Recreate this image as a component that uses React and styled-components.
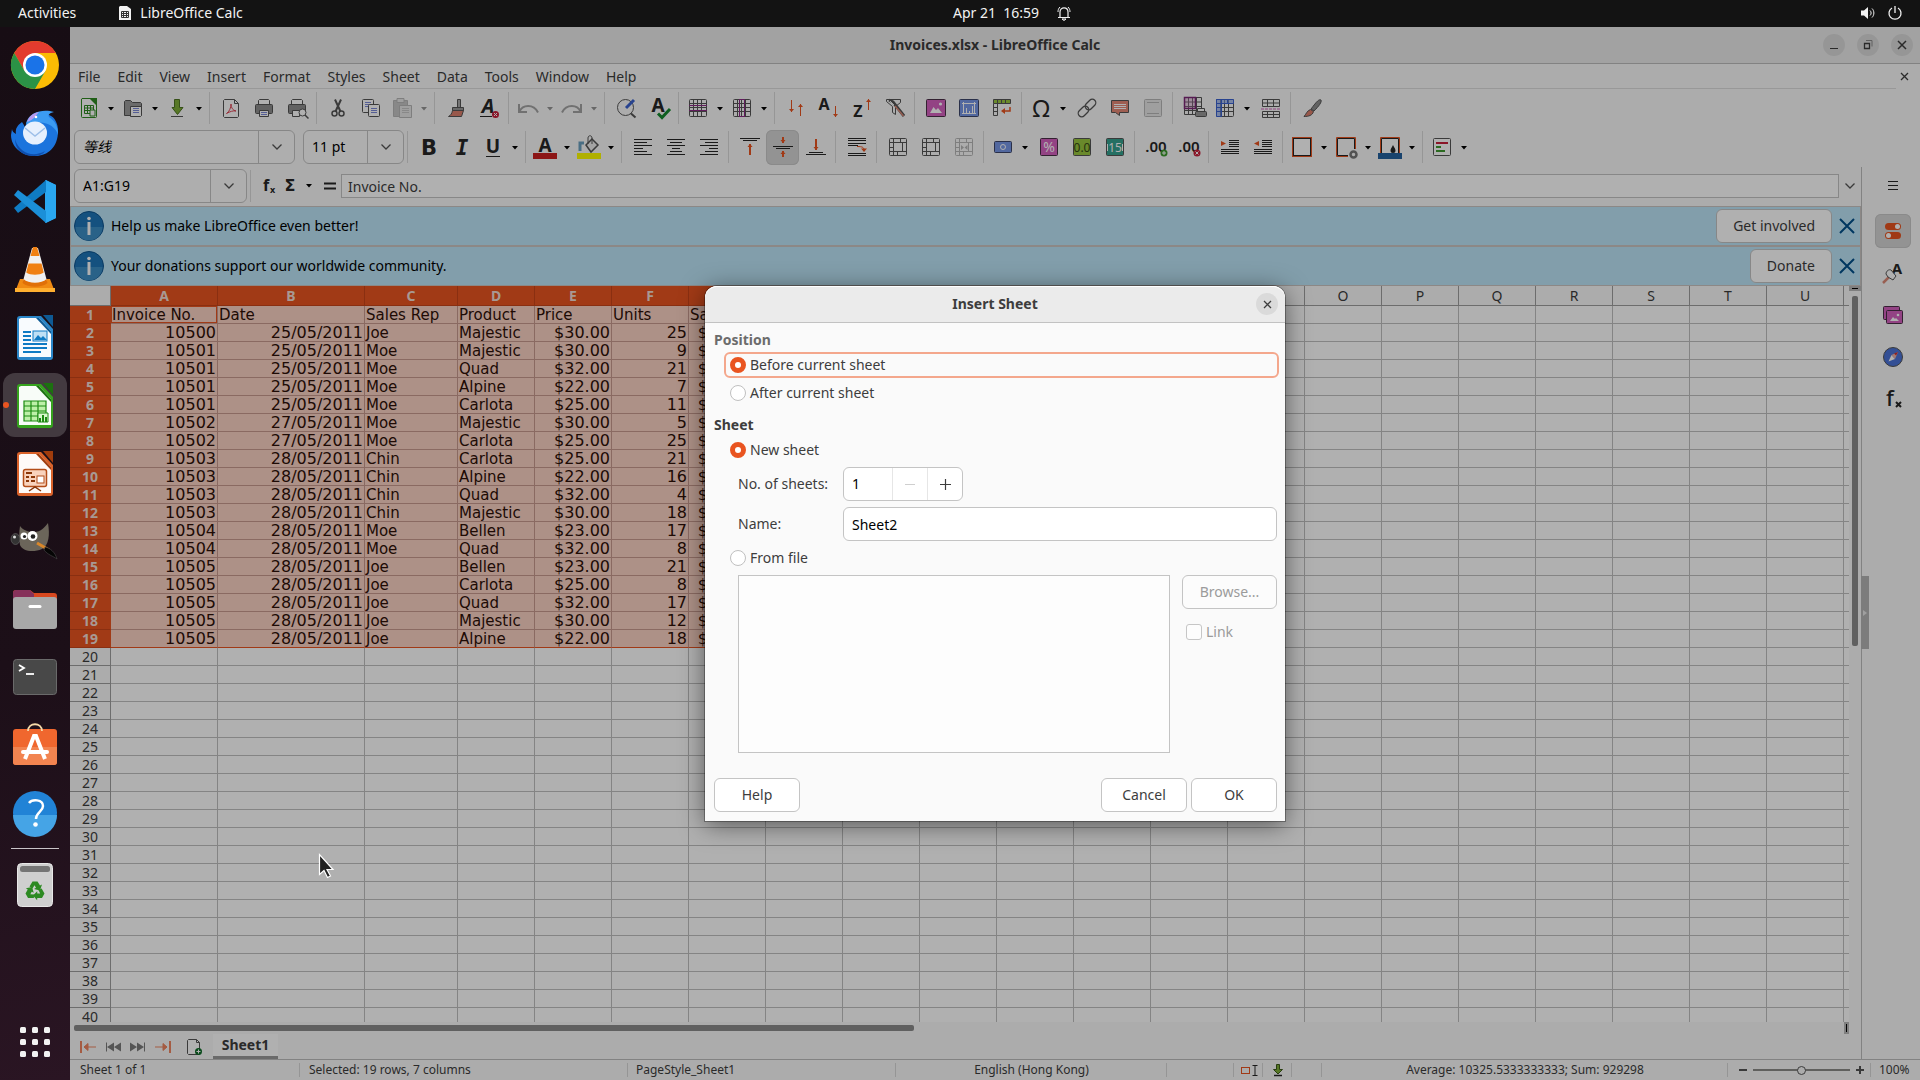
import React from 'react';
import styled, { createGlobalStyle, css } from 'styled-components';

const UI = '"Noto Sans", "Noto Sans CJK SC", sans-serif';
const CELL = '"DejaVu Sans", "Noto Sans CJK SC", sans-serif';
const C = {
  text: '#3d3d3d', bg: '#fafafa', line: '#c4c4c4', soft: '#e0e0e0',
  orange: '#e95420', ink: '#555555', dark: '#262626', grid: '#c0c0c0', head: '#9f9f9f',
};

const Global = createGlobalStyle`
  *, *::before, *::after { box-sizing: border-box; }
  body { margin: 0; background: #1c0f18; font: 14px/20px ${UI}; color: ${C.text}; overflow: hidden; }
  button, input, select { font: inherit; color: inherit; margin: 0; }
  button { padding: 0; border: 0; background: none; cursor: default; }
  svg { display: block; flex: none; overflow: visible; }
`;

/* ---------- shell ---------- */
const Screen = styled.div`display: flex; flex-direction: column; height: 100vh;`;
const TopBar = styled.header`
  display: grid; grid-template-columns: 1fr auto 1fr; align-items: center;
  flex: none; height: 27px; padding: 0 18px 1px; background: #131313; color: #f2f2f2;
`;
const TopGroup = styled.div`
  display: flex; align-items: center; gap: ${p => p.$gap || 0}px;
  justify-content: ${p => (p.$end ? 'flex-end' : 'flex-start')};
  padding-left: ${p => p.$lead || 0}px; white-space: pre;
`;
const Desktop = styled.div`display: flex; flex: 1; min-height: 0;`;
const Dock = styled.nav`
  display: flex; flex-direction: column; align-items: center; flex: none; width: 70px; padding: 4px 0;
  background: linear-gradient(170deg, #170d14 0%, #1c0f18 60%, #2a1523 100%);
`;
const DockItem = styled.button`
  position: relative; display: grid; place-items: center; width: 64px; height: 64px; margin: 2px 0;
  border-radius: 12px; background: ${p => (p.$active ? '#433a40' : 'transparent')};
  ${p => p.$active && css`&::before { content: ''; position: absolute; left: 0; top: 29px; width: 6px; height: 6px; border-radius: 50%; background: ${C.orange}; }`}
`;
const DockRule = styled.hr`width: 48px; height: 1px; margin: 1px 0 2px; border: 0; background: #c9c5c8; flex: none;`;
const Spacer = styled.div`flex: 1;`;

const Window = styled.main`
  position: relative; display: flex; flex-direction: column; flex: 1; min-width: 0; background: ${C.bg};
`;
const TitleBar = styled.div`
  display: grid; grid-template-columns: 1fr auto 1fr; align-items: center; flex: none;
  height: 37px; padding: 0 7px; background: #ebebeb; border-bottom: 1px solid #bdbdbd;
`;
const Title = styled.h1`margin: 0; grid-column: 2; font-size: 14px; line-height: 20px; font-weight: 700;`;
const WinButtons = styled.div`display: flex; gap: 12px; justify-content: flex-end;`;
const Round = styled.button`
  display: grid; place-items: center; width: 22px; height: 22px; border-radius: 50%; background: #dadada;
`;
const MenuRow = styled.div`display: flex; flex: none; padding-right: 8px;`;
const MenuBar = styled.nav`
  display: flex; flex: 1; height: 25px; padding: 1px 0 0 8px; gap: 17px; align-items: center; border-bottom: 1px solid #dcdcdc;
`;
const MenuItem = styled.button`height: 24px; white-space: nowrap;`;
const CloseDoc = styled.button`display: grid; place-items: center; width: 16px; height: 24px;`;

/* ---------- tool bars ---------- */
const Bar = styled.div`display: flex; align-items: center; flex: none; height: 39px; padding: 0 0 1px 4px;`;
const Tool = styled.button`
  display: grid; place-items: center; width: 33px; height: 35px; border-radius: 6px;
  opacity: ${p => (p.$off ? 0.4 : 1)};
  ${p => p.$on && css`background: #d6d6d6; box-shadow: inset 0 0 0 1px #c8c8c8;`}
`;
const Split = styled.div`display: flex; width: 44px; height: 35px; opacity: ${p => (p.$off ? 0.4 : 1)};`;
const SplitMain = styled.button`display: grid; place-items: center; width: 30px;`;
const SplitDrop = styled.button`display: grid; place-items: center; width: 14px; padding-top: 2px;`;
const Sep = styled.div`width: 1px; height: 32px; margin: 0 4px 0 3px; background: #dadada; flex: none;`;
const Combo = styled.div`
  display: flex; height: 34px; width: ${p => p.$w}px; margin-right: ${p => p.$gap || 0}px; flex: none;
  border: 1px solid ${C.line}; border-radius: 6px; background: #fdfdfd; overflow: hidden;
`;
const ComboInput = styled.input`
  flex: 1; min-width: 0; padding: 0 8px; border: 0; outline: 0; background: none; color: #000;
  font-style: ${p => (p.$italic ? 'italic' : 'normal')};
`;
const ComboDrop = styled.button`display: grid; place-items: center; width: 36px; border-left: 1px solid ${C.line};`;
const MiniTool = styled.button`display: grid; place-items: center; width: ${p => p.$w}px; height: 34px;`;
const FormulaInput = styled.input`
  flex: 1; min-width: 0; height: 24px; padding: 0 6px; border: 1px solid ${C.line}; background: #fff; outline: 0;
`;

/* ---------- body ---------- */
const Body = styled.div`display: flex; flex: 1; min-height: 0;`;
const Main = styled.div`display: flex; flex-direction: column; flex: 1; min-width: 0;`;
const Info = styled.div`
  display: flex; align-items: center; flex: none; height: 40px; padding: 0 5px 0 3px; gap: 7px;
  border: 1px solid #cbc5c2; background: #bde5f8; color: #000;
`;
const InfoText = styled.span`flex: 1;`;
const InfoClose = styled.button`display: grid; place-items: center; width: 16px; height: 30px;`;
const PushButton = styled.button`
  height: 34px; min-width: ${p => p.$min || 0}px; padding: 0 16px; border: 1px solid ${C.line}; border-radius: 6px;
  background: #fff; color: ${C.text};
  &:disabled { color: #9b9b9b; background: #fcfcfc; }
`;
const GridArea = styled.div`display: flex; flex: 1; min-height: 0;`;
const GridClip = styled.div`flex: 1; min-width: 0; overflow: hidden; background: #fff;`;
const Sheet = styled.table`
  width: 100%; table-layout: fixed; border-collapse: separate; border-spacing: 0; font: 15px/16px ${CELL}; color: #000;
`;
const Col = styled.col`width: ${p => (p.$w ? p.$w + 'px' : 'auto')};`;
const HeadCell = styled.th`
  height: ${p => (p.$top ? 20 : 18)}px; padding: 0; font: ${p => (p.$sel ? 700 : 400)} 14px/17px ${UI};
  color: ${p => (p.$sel ? '#f4ded6' : C.text)};
  background: ${p => (p.$sel ? C.orange : C.bg)};
  border-right: ${p => (p.$last ? 0 : 1)}px solid ${p => (p.$sel ? (p.$top ? '#c8441a' : C.orange) : C.head)};
  border-bottom: 1px solid ${p => (p.$sel ? '#c8441a' : C.head)};
  text-align: center; overflow: hidden;
`;
const Cell = styled.td`
  height: 18px; padding: 1px 1px 0; white-space: nowrap; overflow: hidden;
  font-size: ${p => (p.$num ? 16 : 15)}px;
  text-align: ${p => (p.$num ? 'right' : 'left')};
  border-right: ${p => (p.$last ? 0 : 1)}px solid ${p => (p.$sel ? '#c89a8e' : C.grid)};
  border-bottom: 1px solid ${p => (p.$end ? C.orange : p.$sel ? '#c89a8e' : C.grid)};
  background: ${p => (p.$sel ? '#fbd2c4' : '#fff')};
  color: #2e1008;
  ${p => p.$cursor && css`box-shadow: inset 0 0 0 1px ${C.orange};`}
`;
const VScroll = styled.div`
  display: flex; flex-direction: column; align-items: center; width: 12px; flex: none; gap: 5px;
`;
const SplitV = styled.div`
  display: grid; place-items: center; width: 12px; height: 5px; background: #b8b8b8;
  &::before { content: ''; width: 6px; height: 1px; background: #000; }
`;
const VThumb = styled.div`width: 6px; height: 350px; border-radius: 2px; background: #8b8b8b;`;
const HScroll = styled.div`display: flex; align-items: center; justify-content: space-between; flex: none; height: 12px; padding: 0 12px 0 4px;`;
const HThumb = styled.div`width: 840px; height: 6px; border-radius: 2px; background: #8b8b8b;`;
const SplitH = styled.div`
  display: grid; place-items: center; width: 5px; height: 12px; background: #b8b8b8;
  &::before { content: ''; width: 1px; height: 8px; background: #000; }
`;
const Tabs = styled.div`display: flex; align-items: center; flex: none; height: 25px; padding-left: 5px;`;
const TabTool = styled.button`display: grid; place-items: center; width: 25px; height: 24px; margin-left: ${p => p.$gap || 0}px;`;
const Tab = styled.button`
  align-self: stretch; width: 65px; margin-left: 7px; background: #fff; font-weight: 700; border-bottom: 3px solid #9a9a9a;
`;
const Sidebar = styled.aside`
  position: relative; display: flex; flex-direction: column; align-items: center; gap: 8px; flex: none;
  width: 59px; padding: 2px 0 0 3px; border-left: 1px solid #bdbdbd;
`;
const SideItem = styled.button`
  display: grid; place-items: center; width: 36px; height: 34px; border-radius: 6px; margin-bottom: ${p => (p.$menu ? 3 : 0)}px;
  ${p => p.$on && css`background: #d6d6d6; box-shadow: inset 0 0 0 1px #c8c8c8;`}
`;
const Handle = styled.button`
  position: absolute; left: -1px; top: calc(50% - 37px); width: 8px; height: 73px; display: grid; place-items: center;
  background: #b4b4b4;
`;
const Status = styled.footer`
  display: grid; grid-template-columns: 230px 328px 268px 271px 67px 29px 29px 30px 1fr 143px 49px;
  flex: none; height: 21px; border-top: 1px solid #bdbdbd; font-size: 12px; line-height: 20px;
`;
const Field = styled.div`
  display: flex; align-items: center; min-width: 0; white-space: nowrap; padding: 0 ${p => (p.$pad === undefined ? 8 : p.$pad)}px;
  justify-content: ${p => (p.$mid ? 'center' : 'flex-start')};
  background: linear-gradient(#d8d8d8, #d8d8d8) right center / 1px 14px no-repeat;
  &:last-child { background: none; }
`;
const ZoomField = styled(Field)`gap: 4px; padding: 0 5px 0 9px;`;
const ZoomButton = styled.button`display: grid; place-items: center; width: 12px; height: 16px;`;
const Zoom = styled.input`
  appearance: none; flex: 1; min-width: 0; height: 12px; margin: 0; background: linear-gradient(#8c8c88, #8c8c88) center / 100% 2px no-repeat;
  &::-webkit-slider-thumb { appearance: none; width: 9px; height: 9px; border-radius: 50%; background: #fafafa; border: 1px solid #555; }
`;

/* ---------- dialog ---------- */
const Backdrop = styled.div`
  position: absolute; inset: 0; display: flex; align-items: center; justify-content: center; background: rgba(0, 0, 0, 0.31);
`;
const Dialog = styled.section`
  width: 580px; background: ${C.bg}; border-radius: 12px 12px 0 0;
  box-shadow: 0 0 0 1px rgba(0, 0, 0, 0.3), 0 4px 24px rgba(0, 0, 0, 0.5);
`;
const DialogHead = styled.div`
  display: grid; grid-template-columns: 1fr auto 1fr; align-items: center; height: 37px; padding: 0 7px;
  border-radius: 12px 12px 0 0; background: #ebebeb; border-bottom: 1px solid #c2c2c2; box-shadow: inset 0 1px 0 #fff;
`;
const DialogTitle = styled.h2`grid-column: 2; margin: 0; font-size: 14px; line-height: 20px;`;
const HeadEnd = styled.div`display: flex; justify-content: flex-end;`;
const Form = styled.form`padding: 7px 6px 9px 9px;`;
const Group = styled.fieldset`margin: 0 0 ${p => p.$after}px; padding: 0; border: 0; min-width: 0;`;
const Legend = styled.legend`padding: 0; margin-bottom: 2px; font-weight: 700; color: ${p => (p.$light ? '#6c6c6c' : C.text)};`;
const Option = styled.label`
  display: flex; align-items: center; gap: 4px; height: 26px; margin: 0 0 ${p => p.$after || 0}px 10px; padding-left: 4px;
  border: 2px solid ${p => (p.$focus ? '#f4a78c' : 'transparent')}; border-radius: 6px;
`;
const Radio = styled.input`
  appearance: none; width: 16px; height: 16px; border-radius: 50%; border: 1px solid #c0c0c0; background: #fff;
  &:checked { border: 5px solid ${C.orange}; }
`;
const FormRow = styled.div`
  display: flex; align-items: center; margin: 0 2px ${p => p.$after}px 24px;
`;
const RowLabel = styled.label`width: 105px; flex: none;`;
const TextInput = styled.input`
  flex: 1; min-width: 0; height: 34px; padding: 0 8px; border: 1px solid ${C.line}; border-radius: 6px; background: #fff; color: #000; outline: 0;
`;
const Spin = styled.div`
  display: flex; width: 120px; height: 34px; border: 1px solid ${C.line}; border-radius: 6px; background: #fff; overflow: hidden;
`;
const SpinInput = styled.input`flex: 1; min-width: 0; padding: 0 8px; border: 0; background: none; color: #000; outline: 0;`;
const SpinButton = styled.button`
  display: grid; place-items: center; width: 35px; border-left: 1px solid #e6e6e6; color: #3d3d3d;
  &:disabled { color: #cfcfcf; }
`;
const FileRow = styled.div`display: flex; gap: 12px; margin: 0 2px 0 24px;`;
const FileList = styled.select`
  flex: 1; min-width: 0; height: 178px; border: 1px solid ${C.line}; border-radius: 0; background: #fdfdfd; outline: 0; opacity: 1;
`;
const FileSide = styled.div`display: flex; flex-direction: column; width: 95px; gap: 10px;`;
const CheckLabel = styled.label`display: flex; align-items: center; gap: 4px; height: 26px; padding-left: 4px; color: #9b9b9b;`;
const Check = styled.input`
  appearance: none; width: 16px; height: 16px; border: 1px solid #c6c6c6; border-radius: 3px; background: #fdfdfd;
`;
const Actions = styled.div`display: flex; gap: 4px; padding-right: 2px;`;
const Pointer = styled.svg`position: absolute; left: 318px; top: 853px; pointer-events: none;`;

/* ---------- icons ---------- */
const Svg = ({ s = 24, vb, children }) => (
  <svg width={s} height={s} viewBox={vb || `0 0 ${s} ${s}`} fill="none" aria-hidden="true">{children}</svg>
);
const Glyph = ({ x = 12, y = 20, z = 22, w = 700, f = UI, it, c = C.dark, children }) => (
  <text x={x} y={y} textAnchor="middle" fontSize={z} fontWeight={w} fontStyle={it ? 'italic' : 'normal'} fill={c} style={{ fontFamily: f }}>{children}</text>
);
const Lines = ({ ys, x1 = 3, x2 = 21, c = C.dark, w = 1 }) => ys.map((y, i) => {
  const a = Array.isArray(y) ? y : [y, x1, x2];
  return <path key={i} d={`M${a[1]} ${a[0] + 0.5}H${a[2]}`} stroke={c} strokeWidth={w} />;
});
const Caret = () => <Svg s={8}><path d="M1 2h6L4 5.500z" fill="#000" /></Svg>;
const Chevron = () => <Svg s={12}><path d="M1.500 3.500 6 8l4.500-4.500" stroke="#555" strokeWidth="1.300" /></Svg>;
const Cross = ({ s = 10, c = '#3d3d3d', w = 1.5 }) => (
  <Svg s={s}><path d={`M1 1L${s - 1} ${s - 1}M${s - 1} 1L1 ${s - 1}`} stroke={c} strokeWidth={w} /></Svg>
);
const Arrow = ({ x, y1, y2, c = C.orange, w = 1 }) => {
  const d = y2 > y1 ? -1 : 1;
  return <><path d={`M${x} ${y1}V${y2}`} stroke={c} strokeWidth={w} /><path d={`M${x - 2.5} ${y2 + 3 * d}h5L${x} ${y2}z`} fill={c} /></>;
};
const BadgeX = ({ x = 17.5, y = 18.5 }) => (
  <><circle cx={x} cy={y} r="3.500" fill="#c9213b" /><path d={`M${x - 1.5} ${y - 1.5}l3 3m0-3l-3 3`} stroke="#fff" /></>
);
const BadgePlus = ({ x = 17.5, y = 18.5, c = '#3f9a2f' }) => (
  <><circle cx={x} cy={y} r="3.500" fill={c} /><path d={`M${x - 2} ${y}h4m-2-2v4`} stroke="#fff" /></>
);
const TableLines = ({ c = C.ink }) => (
  <><rect x="3.500" y="3.500" width="17" height="17" rx="1" stroke={c} /><path d="M3.500 7.500h17M3.500 11.500h17M3.500 15.500h17M7.500 3.500v17M11.500 3.500v17M15.500 3.500v17" stroke={c} /></>
);
const MergeBase = () => (
  <><rect x="3.500" y="3.500" width="17" height="17" rx="1" stroke={C.ink} /><path d="M3.500 7.500h17M3.500 12.500h4M3.500 16.500h17M7.500 3.500v17M14.500 3.500v4M16.500 7.500v9M11.500 16.500v4" stroke={C.ink} /></>
);

const ICONS = {
  new: <><path d="M5 2.500h9.500l5 5v13a1 1 0 0 1-1 1H5.500a1 1 0 0 1-1-1V3z" stroke="#2f8a22" fill="#fff" /><path d="M12 2h8v8z" fill="#2f8a22" /><path d="M7.500 9.500h9v8h-9zM7.500 12h9M7.500 14.500h9M10.500 9.500v8M13.500 9.500v8" stroke="#2f8a22" /><path d="M13 14h5v6h-5z" fill="#fff" stroke="#2f8a22" /></>,
  open: <><path d="M3.500 19.500v-14l1-1h5l2 2h8l1 1v12z" fill="#9b9b9b" stroke={C.ink} /><path d="M9.500 10.500h11v9l-1 1h-10z" fill="#fff" stroke={C.ink} /><Lines ys={[12, 14, 16]} x1={12} x2={18} c="#7b88d8" /></>,
  save: <><path d="M9.500 3.500h5v8h3.500l-5.500 7-5.500-7h2.500z" fill="#7fae37" stroke="#4f7423" /><path d="M6 20.500h12" stroke={C.ink} /></>,
  pdf: <><path d="M4.500 4.500l1-1h10l4 4v13l-1 1h-13l-1-1z" stroke={C.ink} fill="#fff" /><path d="M15.500 3.500v4h4" stroke={C.ink} /><path d="M7.500 17.500c3-2 4.500-6 4.500-9.500 0 4 2 6.500 5 7-3-.5-6 .5-9.500 2.500z" stroke="#dd4655" /></>,
  print: <><path d="M6.500 8V4.500l1-1h9l1 1V8" stroke={C.ink} fill="#fff" /><rect x="3.500" y="8.500" width="17" height="9" rx="1" fill="#8f8f8f" stroke={C.ink} /><path d="M7.500 14.500h9v6h-9z" fill="#fff" stroke={C.ink} /><Lines ys={[16, 18]} x1={9} x2={15} c="#7b88d8" /></>,
  preview: <><path d="M6.500 8V4.500l1-1h9l1 1V8" stroke={C.ink} fill="#fff" /><rect x="3.500" y="8.500" width="17" height="9" rx="1" fill="#8f8f8f" stroke={C.ink} /><path d="M7.500 14.500h7v6h-7z" fill="#fff" stroke={C.ink} /><circle cx="17.500" cy="16.500" r="3.500" fill="#fff" stroke={C.ink} /><path d="M20 19l3.500 3.500" stroke={C.ink} strokeWidth="1.500" /></>,
  cut: <><path d="M9 3.500l5.500 12M15 3.500l-5.500 12" stroke={C.ink} strokeWidth="2" /><circle cx="8.500" cy="17.500" r="2.500" stroke={C.ink} strokeWidth="1.500" /><circle cx="15.500" cy="17.500" r="2.500" stroke={C.ink} strokeWidth="1.500" /></>,
  copy: <><rect x="3.500" y="3.500" width="11" height="13" rx="1" stroke={C.ink} fill="#fff" /><Lines ys={[6, 8, 10]} x1={6} x2={12} c="#7b88d8" /><rect x="9.500" y="8.500" width="11" height="12" rx="1" stroke={C.ink} fill="#fff" /><Lines ys={[12, 14, 16]} x1={12} x2={18} c="#7b88d8" /></>,
  paste: <><path d="M3.500 4.500h14v16h-14z" fill="#777" stroke={C.ink} /><path d="M7 2.500h7v4H7z" fill="#ccc" stroke={C.ink} /><path d="M9.500 9.500h12v12h-12z" fill="#ccc" stroke={C.ink} /><Lines ys={[12, 14, 16]} x1={12} x2={19} c="#777" /></>,
  clone: <><path d="M13.500 3.500h3v8h-3z" fill="#aaa" stroke={C.ink} /><path d="M8.500 11.500h11v3h-11z" fill="#999" stroke={C.ink} /><path d="M8.500 14.500h11l-2 6H4.500c2-1 3.500-3 4-6z" fill="#dd7f6c" stroke={C.ink} /></>,
  clear: <><Glyph x={11} y={17} z={20} it>A</Glyph><path d="M3 20.500h12" stroke={C.dark} /><BadgeX x={18.5} /></>,
  undo: <path d="M3 8v8h8M3.500 15.500c3-7 14-8 18.500 1" stroke={C.dark} strokeWidth="2" />,
  redo: <path d="M21 8v8h-8M20.500 15.500c-3-7-14-8-18.500 1" stroke={C.dark} strokeWidth="2" />,
  find: <><circle cx="11.500" cy="11.500" r="8" stroke={C.ink} /><path d="M17 17.500l4.500 4" stroke={C.ink} strokeWidth="2" /><path d="M12 12l8-8" stroke="#3b62d0" strokeWidth="3" /></>,
  spell: <><Glyph x={11} y={16} z={19}>A</Glyph><path d="M11 17.500l4 4 8-8.500" stroke="#158a2e" strokeWidth="3" /></>,
  row: <><TableLines /><path d="M3 9.500h18M3 14.500h18" stroke="#8d2a86" /></>,
  col: <><TableLines /><path d="M9.500 3v18M14.500 3v18M9.500 3.500h5M9.500 20.500h5" stroke="#8d2a86" /></>,
  sort: <><Arrow x={7.5} y1={4} y2={16} /><Arrow x={16.5} y1={20} y2={8} /></>,
  sortA: <><Glyph x={7} y={14} z={16}>A</Glyph><Arrow x={18.5} y1={10} y2={21} /></>,
  sortZ: <><Glyph x={8} y={21} z={16}>Z</Glyph><Arrow x={18.5} y1={14} y2={3} /></>,
  filter: <><path d="M3.500 3.500h14v3l-5 4v8l-3-2v-6l-6-5z" stroke={C.ink} /><path d="M6 4l4 2 11 14" stroke={C.ink} strokeWidth="3" /><path d="M7 5l4 4" stroke="#eee" /><path d="M12 10l8.500 10" stroke="#dd8a78" strokeWidth="1.500" /></>,
  image: <><rect x="2.500" y="3.500" width="19" height="17" rx="1" fill="#d561bf" stroke="#4b3048" /><path d="M6 17l3.500-6 2.500 3 2-2 4 5z" fill="#fff" /><circle cx="16.500" cy="8" r="1.600" fill="#fff" /></>,
  chart: <><rect x="2.500" y="3.500" width="19" height="17" rx="1" fill="#7897e6" stroke="#3d466a" /><path d="M6.500 6v12M5 7.500h14M17.500 6v12M5 17.500h14M9.500 17v-5M12.500 17v-2M15.500 17v-7" stroke="#fff" /></>,
  pivot: <><path d="M3.500 3.500h17v4h-17z" fill="#99c73f" stroke={C.ink} /><path d="M3.500 7.500v12h4v-12M3.500 11.500h4M3.500 15.500h4M7.500 3.500v4M11.500 3.500v4M15.500 3.500v4" stroke={C.ink} /><path d="M20 11v4h-6" stroke={C.orange} strokeWidth="1.500" /><path d="M15 12v6l-4-3z" fill={C.orange} /></>,
  omega: <Glyph y={21} z={24} w={400} f={UI}>Ω</Glyph>,
  link: <><rect x="-6" y="-3.500" width="12" height="7" rx="3.500" stroke={C.ink} strokeWidth="1.300" transform="translate(8.500 15.500) rotate(-45)" /><rect x="-6" y="-3.500" width="12" height="7" rx="3.500" stroke={C.ink} strokeWidth="1.300" transform="translate(15.500 8.500) rotate(-45)" /></>,
  comment: <><path d="M3.500 4.500h17v12h-9v3l-4-3h-4z" fill="#e58876" stroke={C.ink} /><Lines ys={[8, 10, 12]} x1={6} x2={18} c="#fff" /></>,
  header: <><rect x="3.500" y="3.500" width="17" height="17" rx="1" fill="#ccc" stroke={C.ink} /><path d="M6 6.500h12M6 17.500h12" stroke={C.ink} /></>,
  area: <><path d="M2.500 1.500h17v17h-17zM2.500 6h17M2.500 10.500h17M2.500 14.500h17M6.500 1.500v17M10.500 1.500v17M14.500 1.500v17" stroke={C.ink} /><path d="M2.500 1.500h11v11h-11z" fill="#c274b855" stroke="#7d2878" strokeWidth="1.500" /><path d="M15.500 12.500h7v8h-7z" fill="#fff" stroke={C.ink} /><rect x="13.500" y="15.500" width="11" height="5" rx="1" fill="#999" stroke={C.ink} /></>,
  freeze: <><TableLines /><path d="M3.500 3.500h17v4h-17zM3.500 3.500h5v17h-5z" fill="#7897e6" fillOpacity=".6" stroke="#3b62d0" /><path d="M3.500 11.500h5M3.500 15.500h5M14.500 3.500v4" stroke="#3b62d0" /></>,
  split: <><path d="M3.500 3.500h17v7h-17zM3.500 7h17M8.500 3.500v7M14.500 3.500v7M3.500 15.500h17v6h-17zM3.500 18.500h17M8.500 15.500v6M14.500 15.500v6" stroke={C.ink} /><path d="M2 13h20" stroke="#d561bf" strokeDasharray="3 1" /></>,
  draw: <><path d="M21 4c-2-1-4 1-10 9l3 2c5-5 8-9 7-11z" fill="#8f8f8f" stroke={C.ink} /><path d="M10.500 13.500l3 2c-1 4-5 5-9.500 5 2-2 3-6 6.500-7z" fill="#dd7f6c" stroke={C.ink} /></>,
  bold: <Glyph y={20} z={21} f={CELL}>B</Glyph>,
  italic: <Glyph y={20} z={21} f='"DejaVu Sans Mono", monospace' it>I</Glyph>,
  under: <><Glyph y={18} z={19}>U</Glyph><path d="M5 21.500h14" stroke={C.dark} /></>,
  fcolor: <><Glyph y={17} z={19}>A</Glyph><path d="M0 18h24v6H0z" fill="#cb2020" /></>,
  fill: <><path d="M3 16V8h4" stroke="#6aa0c0" strokeWidth="3" /><path d="M9 10l6-6 6 6-7 7z" fill="#eee" stroke={C.ink} strokeWidth="1.500" /><path d="M11 9V3c0-3 4-3 4 0v6" stroke={C.ink} /><path d="M0 18h24v6H0z" fill="#ffff00" /></>,
  left: <Lines ys={[4, [7, 3, 16], 10, [13, 3, 12], [16, 3, 16], 19]} />,
  center: <Lines ys={[4, [7, 6, 18], 10, [13, 8, 16], [16, 6, 18], 19]} />,
  right: <Lines ys={[4, [7, 8, 21], 10, [13, 12, 21], [16, 8, 21], 19]} />,
  vtop: <><Lines ys={[[3, 2, 22], [5, 5, 19]]} /><Arrow x={12} y1={20} y2={9} w={2} /></>,
  vmid: <><Lines ys={[[11, 2, 22], [13, 5, 19]]} /><Arrow x={12} y1={2} y2={8} w={2} /><Arrow x={12} y1={22} y2={16} w={2} /></>,
  vbot: <><Lines ys={[[17, 5, 19], [19, 2, 22]]} /><Arrow x={12} y1={4} y2={15} w={2} /></>,
  wrap: <><Lines ys={[3, 5, 8, [10, 3, 13], 18, 20]} /><path d="M12 11.500c6 0 7 1 7 4" stroke={C.orange} /><path d="M16 13.500h6l-3 3.500z" fill={C.orange} /></>,
  merge: <MergeBase />,
  unmerge: <><MergeBase /><path d="M9 10l3 2.500L9 15zM15.500 10l-3 2.500 3 2.500z" fill={C.ink} /></>,
  currency: <><rect x="3.500" y="6.500" width="17" height="11" rx="1" fill="#7897e6" stroke="#3d466a" /><circle cx="12" cy="12" r="2.500" stroke="#fff" /></>,
  percent: <><rect x="3.500" y="3.500" width="17" height="17" rx="1" fill="#d561bf" stroke="#4b3048" /><Glyph y={17} z={14} w={400} c="#fff">%</Glyph></>,
  number: <><rect x="3.500" y="3.500" width="17" height="17" rx="1" fill="#99c73f" stroke={C.ink} /><Glyph y={17} z={12} w={400} c="#364715">0.0</Glyph></>,
  date: <><rect x="3.500" y="3.500" width="17" height="17" rx="1" fill="#35a18f" stroke={C.ink} /><Glyph y={17} z={12} w={400} c="#fff">15</Glyph><path d="M4.500 9v7M19.500 9v7" stroke="#fff" /></>,
  decAdd: <><Glyph x={12} y={17} z={15} w={600}>.00</Glyph><BadgePlus x={20} y={18} /></>,
  decDel: <><Glyph x={12} y={17} z={15} w={600}>.00</Glyph><BadgeX x={20} y={18} /></>,
  indent: <><Lines ys={[[5, 11, 21], [7, 11, 21], [9, 11, 21], [11, 11, 21], 14, 16, 18]} /><path d="M3 6v5l5-2.500z" fill={C.orange} /></>,
  outdent: <><Lines ys={[[5, 11, 21], [7, 11, 21], [9, 11, 21], [11, 11, 21], 14, 16, 18]} /><path d="M8 6v5L3 8.500z" fill={C.orange} /></>,
  border: <><rect x="2.500" y="2.500" width="19" height="19" stroke={C.orange} /><rect x="3.500" y="3.500" width="17" height="17" stroke={C.dark} fill="#fff" /></>,
  bstyle: <><path d="M14 21.500H2.500v-19h19V14" stroke={C.orange} /><path d="M14 20.500H3.500v-17h17V14" stroke={C.dark} /><circle cx="19.500" cy="19.500" r="3" stroke="#777" strokeWidth="2.500" /></>,
  bcolor: <><path d="M2.500 18V2.500h19V18" stroke={C.orange} /><path d="M3.500 18V3.500h17V18" stroke={C.dark} fill="#fff" /><path d="M15 10c1.500 3 2.500 4 2.500 5.500a2.500 2.500 0 0 1-5 0c0-1.500 1-2.500 2.500-5.500z" fill={C.dark} /><path d="M0 18h24v6H0z" fill="#25629f" /></>,
  cond: <><rect x="3.500" y="3.500" width="17" height="17" rx="1" stroke={C.ink} fill="#fff" /><path d="M6 8h12" stroke="#c9213b" strokeWidth="2" /><path d="M6 12h5M6 16h9" stroke="#3f9a2f" strokeWidth="2" /></>,
};
const Icon = ({ n }) => <Svg>{ICONS[n]}</Svg>;

/* "v" adds a drop-down arrow, "-" greys the tool out, "*" shows it pressed */
const STANDARD = ['new v', 'open v', 'save v', '|', 'pdf', 'print', 'preview', '|', 'cut', 'copy', 'paste v-', '|', 'clone', 'clear', '|', 'undo v-', 'redo v-', '|', 'find', 'spell', '|', 'row v', 'col v', '|', 'sort', 'sortA', 'sortZ', 'filter', '|', 'image', 'chart', 'pivot', '|', 'omega v', 'link', 'comment', 'header -', '|', 'area', 'freeze v', 'split', '|', 'draw'];
const FORMATTING = ['|', 'bold', 'italic', 'under v', '|', 'fcolor v', 'fill v', '|', 'left', 'center', 'right', '|', 'vtop', 'vmid *', 'vbot', '|', 'wrap', '|', 'merge', 'merge', 'unmerge -', '|', 'currency v', 'percent', 'number', 'date', '|', 'decAdd', 'decDel', '|', 'indent', 'outdent', '|', 'border v', 'bstyle v', 'bcolor v', '|', 'cond v'];
const Tools = ({ items }) => items.map((it, i) => {
  if (it === '|') return <Sep key={i} />;
  const [n, flag = ''] = it.split(' ');
  const off = flag.includes('-');
  return flag.includes('v')
    ? <Split key={i} $off={off}><SplitMain aria-label={n}><Icon n={n} /></SplitMain><SplitDrop aria-label={`${n} options`}><Caret /></SplitDrop></Split>
    : <Tool key={i} aria-label={n} $off={off} $on={flag.includes('*')}><Icon n={n} /></Tool>;
});

const DocShape = ({ c, d, children }) => (
  <><path d="M10 3h20l12 13v28a3 3 0 0 1-3 3H9a3 3 0 0 1-3-3V6a3 3 0 0 1 3-3z" fill={c} /><path d="M10 5h18l12 13v26H8V6z" fill="#fff" opacity=".97" /><path d="M32 2h10v12z" fill={d} /><path d="M28 5l12 13v3L25 5z" fill={d} />{children}</>
);
const DOCK = [
  ['Google Chrome', <><circle cx="24" cy="24" r="24" fill="#fbbc04" /><path d="M3.200 12A24 24 0 0 1 44.800 12H24L13.600 30z" fill="#e33b2e" /><path d="M3.200 12A24 24 0 0 0 24 48l10.400-18H13.600z" fill="#2b9246" /><circle cx="24" cy="24" r="12" fill="#fff" /><circle cx="24" cy="24" r="9.500" fill="#1a73e8" /></>],
  ['Thunderbird', <><path d="M1 20c0 2 2 4 4 5-1-6 2-9 6-12 2 3 3 5 3 5 3-10 12-13 24-12 6 2 9 9 9 16 0 16-10 25-23 25S0 38 0 26z" fill="#1b74dd" /><path d="M15 14c4-12 18-14 28-11-5 1-6 3-5 5 6 4 9 9 9 18-2-8-12-14-22-12-6 1-9 3-10 0z" fill="#3b9bf2" /><path d="M4 30c4 14 18 19 30 12-2 4-8 5-12 5C11 47 4 40 4 30z" fill="#0f4fae" /><ellipse cx="24" cy="24" rx="12" ry="11.500" fill="#e6f0fd" /><path d="M14 19l10 8 10-8" stroke="#9dbfe8" strokeWidth="1.500" /><path d="M16 13c2-6 6-9 12-10-3 3-5 8-12 10z" fill="#b79bf0" /><circle cx="25" cy="8" r="1.300" fill="#fff" /></>],
  ['Visual Studio Code', <><path d="M34 3l11 5v33l-11 5z" fill="#2aa7f0" /><path d="M35 3L3 31l4 5L35 15z" fill="#0f7cc4" /><path d="M35 46L3 18l4-5 28 21z" fill="#1b8fd8" /><path d="M35 3l10 5v33l-10 5z" fill="#2aa7f0" /></>],
  ['VLC', <><path d="M9 34h30l5 13H4z" fill="#f08a12" /><path d="M4 43h40v4H4z" fill="#ffb030" /><path d="M21 3h6l9 33c-5 5-19 5-24 0z" fill="#f0f0f0" /><path d="M22 2h4l2.500 9h-9zM17.500 18.500h13l2.200 9c-4 3-13.500 3-17.500 0z" fill="#f08012" /><path d="M12.500 34c5 5 18 5 23 0l1 4c-6 5-19 5-25 0z" fill="#e07008" /></>],
  ['LibreOffice Writer', <DocShape c="#2a86c8" d="#0e5a94"><path d="M12 19h8M12 23h8M12 27h8M12 31h24M12 35h24M12 39h18" stroke="#0f7bc4" strokeWidth="2" /><rect x="22" y="18" width="14" height="10" fill="#bfe0f5" stroke="#0f7bc4" /><path d="M23 27l4-5 3 3 2-2 4 4z" fill="#0f7bc4" /></DocShape>],
  ['LibreOffice Calc', <DocShape c="#36a31e" d="#1c7010"><path d="M13 20h22v20H13z" fill="#bdf0a8" /><path d="M13 20h22v20H13zM13 25h22M13 30h22M13 35h22M20 20v20M27 20v20" stroke="#1c8a12" strokeWidth="1.200" /><path d="M27 32h10v9H27z" fill="#d8f7cc" stroke="#1c8a12" /><path d="M29 41v-4M32 41v-7M35 41v-5" stroke="#1c8a12" strokeWidth="2" /></DocShape>],
  ['LibreOffice Impress', <DocShape c="#d9622a" d="#a03c0c"><rect x="12.500" y="20.500" width="23" height="17" rx="2" fill="#f9d3bd" stroke="#b34d18" strokeWidth="1.500" /><path d="M15 24h6M15 28h3M15 32h3M20 28h4M20 32h4" stroke="#8a3608" strokeWidth="2" /><rect x="26" y="27" width="7" height="7" fill="#fff" stroke="#b34d18" /><path d="M18 42l6-4 6 4" stroke="#8a3608" strokeWidth="1.500" /></DocShape>],
  ['GIMP', <><path d="M9 9c3 4 8 6 14 6 7 0 11-5 14-9 2 12 1 22-6 26-9 4-20 2-22-4-1-6-1-13 0-19z" fill="#6b655a" /><ellipse cx="4.500" cy="22" rx="4.500" ry="5.500" fill="#333" stroke="#777" strokeWidth=".5" /><circle cx="3.500" cy="20" r="1.500" fill="#ddd" /><circle cx="13" cy="19" r="3.500" fill="#fff" /><circle cx="21.500" cy="19" r="5" fill="#fff" /><circle cx="13.500" cy="19.500" r="1.600" fill="#222" /><circle cx="22" cy="19.500" r="2.300" fill="#222" /><path d="M26 26l12 7" stroke="#d9872a" strokeWidth="3" /><path d="M34 30c5 1 10 5 12 12-4-3-9-4-13-9z" fill="#050505" stroke="#555" strokeWidth=".5" /></>],
  ['Files', <><path d="M2 8a3 3 0 0 1 3-3h14l4 3h20a3 3 0 0 1 3 3v12H2z" fill="#d8481f" /><path d="M2 8a3 3 0 0 1 3-3h14l4 4v8H2z" fill="#86315a" /><rect x="2" y="12" width="44" height="32" rx="3" fill="#a8a8a8" /><path d="M19 21.500h10" stroke="#fff" strokeWidth="3" strokeLinecap="round" /></>],
  ['Terminal', <><rect x="2.500" y="6.500" width="43" height="35" rx="3" fill="#484848" stroke="#6a6a6a" /><path d="M8 12l5 3-5 3" stroke="#fff" strokeWidth="1.800" /><path d="M15 21h8" stroke="#fff" strokeWidth="1.800" /></>],
  ['Ubuntu Software', <><rect x="2" y="8" width="44" height="36" rx="3" fill="#f0672e" /><path d="M2 26h44v15a3 3 0 0 1-3 3H5a3 3 0 0 1-3-3z" fill="#f28450" /><path d="M17 10c0-9 14-9 14 0" stroke="#f5d9a8" strokeWidth="1.800" /><path d="M14 38l9-23h2l9 23" stroke="#fff" strokeWidth="4" /><path d="M12 31h24" stroke="#fff" strokeWidth="4" strokeLinecap="round" /></>],
  ['Help', <><circle cx="24" cy="24" r="22" fill="#2183d6" /><path d="M2 26a22 22 0 0 0 44 0z" fill="#45a4e6" /><path d="M18 14c3-4 14-4 14 3 0 6-7 6-7 13" stroke="#fff" strokeWidth="2.500" /><circle cx="24.500" cy="35.500" r="2.300" fill="#fff" /></>],
];
const DockIcon = ({ children }) => <svg width="48" height="48" viewBox="0 0 48 48" fill="none" aria-hidden="true">{children}</svg>;

/* ---------- data ---------- */
const LETTERS = 'ABCDEFGHIJKLMNOPQRSTU'.split('');
const WIDTHS = [107, 147, 93].concat(Array(18).fill(77));
const HEAD = ['Invoice No.', 'Date', 'Sales Rep', 'Product', 'Price', 'Units', 'Sales'];
const RAW = `10500 25 Joe Majestic 30 25|10501 25 Moe Majestic 30 9|10501 25 Moe Quad 32 21|10501 25 Moe Alpine 22 7|10501 25 Moe Carlota 25 11|10502 27 Moe Majestic 30 5|10502 27 Moe Carlota 25 25|10503 28 Chin Carlota 25 21|10503 28 Chin Alpine 22 16|10503 28 Chin Quad 32 4|10503 28 Chin Majestic 30 18|10504 28 Moe Bellen 23 17|10504 28 Moe Quad 32 8|10505 28 Joe Bellen 23 21|10505 28 Joe Carlota 25 8|10505 28 Joe Quad 32 17|10505 28 Joe Majestic 30 12|10505 28 Joe Alpine 22 18`;
const ROWS = [HEAD, ...RAW.split('|').map(r => {
  const [no, day, rep, prod, price, units] = r.split(' ');
  const total = (price * units).toFixed(2);
  return [no, `${day}/05/2011`, rep, prod, `$${price}.00`, units, `$${total}`];
})];

const Grid = () => (
  <Sheet>
    <colgroup><Col $w={41} />{WIDTHS.map((w, i) => <Col key={i} $w={w} />)}<Col /></colgroup>
    <thead><tr>
      <HeadCell $top />
      {LETTERS.map((l, i) => <HeadCell key={l} $top $sel={i < 7} scope="col">{l}</HeadCell>)}
      <HeadCell $top $last />
    </tr></thead>
    <tbody>
      {Array.from({ length: 40 }, (_, r) => (
        <tr key={r}>
          <HeadCell $sel={r < 19} scope="row">{r + 1}</HeadCell>
          {LETTERS.map((l, i) => {
            const sel = r < 19 && i < 7;
            return <Cell key={l} $sel={sel} $end={sel && r === 18} $cursor={r === 0 && i === 0} $num={r > 0 && ![2, 3].includes(i)}>{sel ? ROWS[r][i] : ''}</Cell>;
          })}
          <Cell $last />
        </tr>
      ))}
    </tbody>
  </Sheet>
);

const InfoBadge = () => (
  <Svg s={30}><circle cx="15" cy="15" r="14.500" fill="#1f76b8" stroke="#0f5590" /><path d="M1.500 16a13.500 13.500 0 0 0 27 0z" fill="#3c8ec6" /><circle cx="15" cy="7.500" r="1.800" fill="#fff" /><path d="M15 11v13" stroke="#fff" strokeWidth="3" /></Svg>
);
const InfoBar = ({ text, action }) => (
  <Info role="status"><InfoBadge /><InfoText>{text}</InfoText><PushButton>{action}</PushButton><InfoClose aria-label="Close"><Cross s={16} c="#00508c" w={2} /></InfoClose></Info>
);

const InsertSheet = () => (
  <Dialog role="dialog" aria-labelledby="dlg-title">
    <DialogHead>
      <DialogTitle id="dlg-title">Insert Sheet</DialogTitle>
      <HeadEnd><Round aria-label="Close"><Cross s={9} w={1.3} /></Round></HeadEnd>
    </DialogHead>
    <Form onSubmit={e => e.preventDefault()}>
      <Group $after={9}>
        <Legend $light>Position</Legend>
        <Option $focus $after={2}><Radio type="radio" name="pos" defaultChecked />Before current sheet</Option>
        <Option><Radio type="radio" name="pos" />After current sheet</Option>
      </Group>
      <Group $after={25}>
        <Legend>Sheet</Legend>
        <Option $after={4}><Radio type="radio" name="src" defaultChecked />New sheet</Option>
        <FormRow $after={6}>
          <RowLabel htmlFor="count">No. of sheets:</RowLabel>
          <Spin>
            <SpinInput id="count" defaultValue="1" />
            <SpinButton type="button" disabled aria-label="Decrease"><Svg s={12}><path d="M1 6.500h10" stroke="currentColor" /></Svg></SpinButton>
            <SpinButton type="button" aria-label="Increase"><Svg s={12}><path d="M1 6.500h11M6.500 1v11" stroke="currentColor" strokeWidth="1.200" /></Svg></SpinButton>
          </Spin>
        </FormRow>
        <FormRow $after={4}>
          <RowLabel htmlFor="name">Name:</RowLabel>
          <TextInput id="name" defaultValue="Sheet2" />
        </FormRow>
        <Option $after={4}><Radio type="radio" name="src" />From file</Option>
        <FileRow>
          <FileList multiple disabled aria-label="Sheets in file" />
          <FileSide>
            <PushButton type="button" disabled>Browse...</PushButton>
            <CheckLabel><Check type="checkbox" disabled />Link</CheckLabel>
          </FileSide>
        </FileRow>
      </Group>
      <Actions>
        <PushButton type="button" $min={86}>Help</PushButton>
        <Spacer />
        <PushButton type="button" $min={86}>Cancel</PushButton>
        <PushButton $min={86}>OK</PushButton>
      </Actions>
    </Form>
  </Dialog>
);

export default function App() {
  return (
    <Screen>
      <Global />
      <TopBar>
        <TopGroup $gap={42}>
          <span>Activities</span>
          <TopGroup $gap={8}>
            <Svg s={14}><path d="M2 0h7l4 3v11H1V1z" fill="#f2f2f2" /><path d="M3.500 5.500h7v6h-7zM3.500 7.500h7M3.500 9.500h7M5.500 5.500v6M8.500 5.500v6" stroke="#333" /></Svg>
            <span>LibreOffice Calc</span>
          </TopGroup>
        </TopGroup>
        <TopGroup $gap={18} $lead={104}>
          <span>Apr 21  16:59</span>
          <Svg s={14}><path d="M1 11.500h12M3 11V6c0-5.500 8-5.500 8 0v5" stroke="#f2f2f2" strokeWidth="1.200" /><path d="M5 13h4l-2 1.500zM1 6c0-2 .5-3.500 2-5M13 6c0-2-.5-3.500-2-5" stroke="#f2f2f2" /></Svg>
        </TopGroup>
        <TopGroup $gap={13} $end>
          <Svg s={14}><path d="M0 4.500h3L7 1v12L3 9.500H0z" fill="#f2f2f2" /><path d="M9 4.500c1.500 1.500 1.500 3.500 0 5M11 2.500c2.500 2.500 2.500 6.500 0 9" stroke="#f2f2f2" /></Svg>
          <Svg s={14}><path d="M4 2a6 6 0 1 0 6 0M7 0v7" stroke="#f2f2f2" strokeWidth="1.300" /></Svg>
        </TopGroup>
      </TopBar>
      <Desktop>
        <Dock>
          {DOCK.map(([name, art]) => <DockItem key={name} aria-label={name} $active={name === 'LibreOffice Calc'}><DockIcon>{art}</DockIcon></DockItem>)}
          <DockRule />
          <DockItem aria-label="Trash"><DockIcon><rect x="6.500" y="2.500" width="35" height="43" rx="4" fill="#cfcfcf" stroke="#e8e8e8" /><rect x="9" y="5" width="30" height="6" rx="2.500" fill="#757575" /><g transform="translate(24 30)" fill="#2d8a22">{[0, 120, 240].map(a => <g key={a} transform={`rotate(${a})`}><path d="M-5.500-4.500l3-5h5l2.500 4 2-1-2 6-6-1.500 2-1.200-1.500-2.500-2 3.200z" /></g>)}</g></DockIcon></DockItem>
          <Spacer />
          <DockItem aria-label="Show Applications"><DockIcon>{[0, 1, 2].flatMap(a => [0, 1, 2].map(b => <rect key={`${a}${b}`} x={9 + a * 12} y={9 + b * 12} width="6" height="6" rx="1.500" fill="#f2f2f2" />))}</DockIcon></DockItem>
        </Dock>
        <Window>
          <TitleBar>
            <Title>Invoices.xlsx - LibreOffice Calc</Title>
            <WinButtons>
              <Round aria-label="Minimize"><Svg s={10}><path d="M1 8.500h8" stroke={C.text} /></Svg></Round>
              <Round aria-label="Restore"><Svg s={10}><path d="M1.500 3.500h5v5h-5z" stroke={C.text} strokeWidth="1.300" /><path d="M3 .5h6v6" stroke="#888" /></Svg></Round>
              <Round aria-label="Close"><Cross s={10} /></Round>
            </WinButtons>
          </TitleBar>
          <MenuRow>
            <MenuBar>{['File', 'Edit', 'View', 'Insert', 'Format', 'Styles', 'Sheet', 'Data', 'Tools', 'Window', 'Help'].map(m => <MenuItem key={m}>{m}</MenuItem>)}</MenuBar>
            <CloseDoc aria-label="Close document"><Cross s={9} w={1.3} /></CloseDoc>
          </MenuRow>
          <Bar role="toolbar" aria-label="Standard"><Tools items={STANDARD} /></Bar>
          <Bar role="toolbar" aria-label="Formatting">
            <Combo $w={221} $gap={8}><ComboInput $italic aria-label="Font name" defaultValue="等线" /><ComboDrop aria-label="Font list"><Chevron /></ComboDrop></Combo>
            <Combo $w={101}><ComboInput aria-label="Font size" defaultValue="11 pt" /><ComboDrop aria-label="Size list"><Chevron /></ComboDrop></Combo>
            <Tools items={FORMATTING} />
          </Bar>
          <Body>
            <Main>
              <Bar>
                <Combo $w={173}><ComboInput aria-label="Name box" defaultValue="A1:G19" /><ComboDrop aria-label="Range list"><Chevron /></ComboDrop></Combo>
                <Sep />
                <MiniTool $w={26} aria-label="Function wizard"><Svg s={20}><Glyph x={8} y={15} z={16}>f</Glyph><Glyph x={14.5} y={17} z={9}>x</Glyph></Svg></MiniTool>
                <MiniTool $w={18} aria-label="Select function"><Svg s={18}><Glyph x={9} y={14} z={16} f={CELL}>Σ</Glyph></Svg></MiniTool>
                <MiniTool $w={20} aria-label="Function list"><Caret /></MiniTool>
                <MiniTool $w={22} aria-label="Formula"><Svg s={14}><path d="M1 4.500h12M1 9.500h12" stroke={C.dark} strokeWidth="2" /></Svg></MiniTool>
                <FormulaInput aria-label="Input line" defaultValue="Invoice No." />
                <MiniTool $w={22} aria-label="Expand formula bar"><Chevron /></MiniTool>
              </Bar>
              <InfoBar text="Help us make LibreOffice even better!" action="Get involved" />
              <InfoBar text="Your donations support our worldwide community." action="Donate" />
              <GridArea>
                <GridClip><Grid /></GridClip>
                <VScroll><SplitV /><VThumb /></VScroll>
              </GridArea>
              <HScroll><HThumb /><SplitH /></HScroll>
              <Tabs>
                <TabTool aria-label="First sheet"><Svg s={16}><path d="M1 2v12" stroke={C.orange} strokeWidth="2" opacity=".7" /><path d="M4 8h12M8 4.500L4 8l4 3.500z" stroke={C.orange} fill={C.orange} opacity=".7" /></Svg></TabTool>
                <TabTool aria-label="Previous sheet"><Svg s={16}><path d="M1.500 3.500v9" stroke="#7c7c7c" /><path d="M9 3.500v9L2 8zM16 3.500v9L9 8z" fill="#7c7c7c" /></Svg></TabTool>
                <TabTool aria-label="Next sheet"><Svg s={16}><path d="M14.500 3.500v9" stroke="#7c7c7c" /><path d="M0 3.500v9L7 8zM7 3.500v9L14 8z" fill="#7c7c7c" /></Svg></TabTool>
                <TabTool aria-label="Last sheet"><Svg s={16}><path d="M15 2v12" stroke={C.orange} strokeWidth="2" opacity=".7" /><path d="M0 8h12M8 4.500L12 8l-4 3.500z" stroke={C.orange} fill={C.orange} opacity=".7" /></Svg></TabTool>
                <TabTool $gap={6} aria-label="Add sheet"><Svg s={18}><path d="M2.500 2.500l1-1h8l3 3v12h-11l-1-1z" stroke={C.ink} fill="#fff" /><path d="M11.500 1.500v3h3" stroke={C.ink} /><BadgePlus x={13.5} y={13.5} c="#116e2a" /></Svg></TabTool>
                <Tab>Sheet1</Tab>
              </Tabs>
            </Main>
            <Sidebar>
              <SideItem $menu aria-label="Sidebar settings"><Svg s={12}><Lines ys={[1, 5, 9]} x1={1} x2={11} /></Svg></SideItem>
              <SideItem $on aria-label="Properties"><Svg><rect x="4" y="4" width="16" height="7" rx="3.500" fill="#e8531f" /><circle cx="16.500" cy="7.500" r="2.500" fill="#fff" /><rect x="4" y="13" width="16" height="7" rx="3.500" fill="#e8531f" /><circle cx="7.500" cy="16.500" r="2.500" fill="#fff" /></Svg></SideItem>
              <SideItem aria-label="Styles"><Svg><Glyph x={16} y={13} z={15}>A</Glyph><path d="M2 22l6-6" stroke="#dd8a78" strokeWidth="2.500" /><path d="M5 13c0-3 3-5 5-4l5 6-3 4-5-3z" fill="#fff" stroke={C.ink} /></Svg></SideItem>
              <SideItem aria-label="Gallery"><Svg><rect x="2.500" y="3.500" width="16" height="13" rx="1" fill="#d561bf" stroke="#4b3048" /><rect x="5.500" y="7.500" width="16" height="13" rx="1" fill="#d561bf" stroke="#4b3048" /><path d="M9 18l3-4 2 2 1-1 3 3z" fill="#fff" /><circle cx="17" cy="12" r="1.300" fill="#fff" /></Svg></SideItem>
              <SideItem aria-label="Navigator"><Svg><circle cx="12" cy="12" r="9.500" fill="#4a73d8" stroke={C.ink} /><path d="M7.500 16.500l3-6.500 3.500 4z" fill="#fff" /><path d="M17 7l-6.500 3 3.500 4z" fill="#e8b0a8" /><path d="M17 7l-4 1.500 2 2z" fill="#d03030" /></Svg></SideItem>
              <SideItem aria-label="Functions"><Svg><Glyph x={9} y={19} z={22} w={500}>f</Glyph><path d="M15 15l5 5m0-5l-5 5" stroke={C.dark} strokeWidth="2" /></Svg></SideItem>
              <Handle aria-label="Hide sidebar"><Svg s={6}><path d="M1 0v6l4-3z" fill="#e6e6e6" /></Svg></Handle>
            </Sidebar>
          </Body>
          <Status>
            <Field $pad={10}>Sheet 1 of 1</Field>
            <Field $pad={9}>Selected: 19 rows, 7 columns</Field>
            <Field>PageStyle_Sheet1</Field>
            <Field $mid>English (Hong Kong)</Field>
            <Field />
            <Field $mid $pad={0}><Svg s={18}><rect x="1.500" y="6.500" width="8" height="6" stroke={C.orange} /><path d="M12.500 4.500h5M12.500 14.500h5M15 4.500v10" stroke={C.dark} /></Svg></Field>
            <Field $mid $pad={0}><Svg s={14}><path d="M5.500 1.500h3v5h3L7 11 2.500 6.500h3z" fill="#7fae37" stroke="#3c5a1a" /><path d="M3 12.500h8" stroke={C.dark} strokeWidth="1.500" /></Svg></Field>
            <Field />
            <Field $mid>Average: 10325.5333333333; Sum: 929298</Field>
            <ZoomField>
              <ZoomButton aria-label="Zoom out"><Svg s={8}><path d="M0 4h8" stroke={C.ink} strokeWidth="2" /></Svg></ZoomButton>
              <Zoom type="range" min="0" max="100" defaultValue="50" aria-label="Zoom" />
              <ZoomButton aria-label="Zoom in"><Svg s={8}><path d="M0 4h8M4 0v8" stroke={C.ink} strokeWidth="2" /></Svg></ZoomButton>
            </ZoomField>
            <Field>100%</Field>
          </Status>
          <Backdrop><InsertSheet /></Backdrop>
        </Window>
      </Desktop>
      <Pointer width="18" height="26" viewBox="0 0 18 26" fill="none"><path d="M1.500 1.500v20l4.500-4 3.500 7 3-1.500-3.500-6.500h6z" fill="#222" stroke="#fff" strokeWidth="1.200" /></Pointer>
    </Screen>
  );
}
